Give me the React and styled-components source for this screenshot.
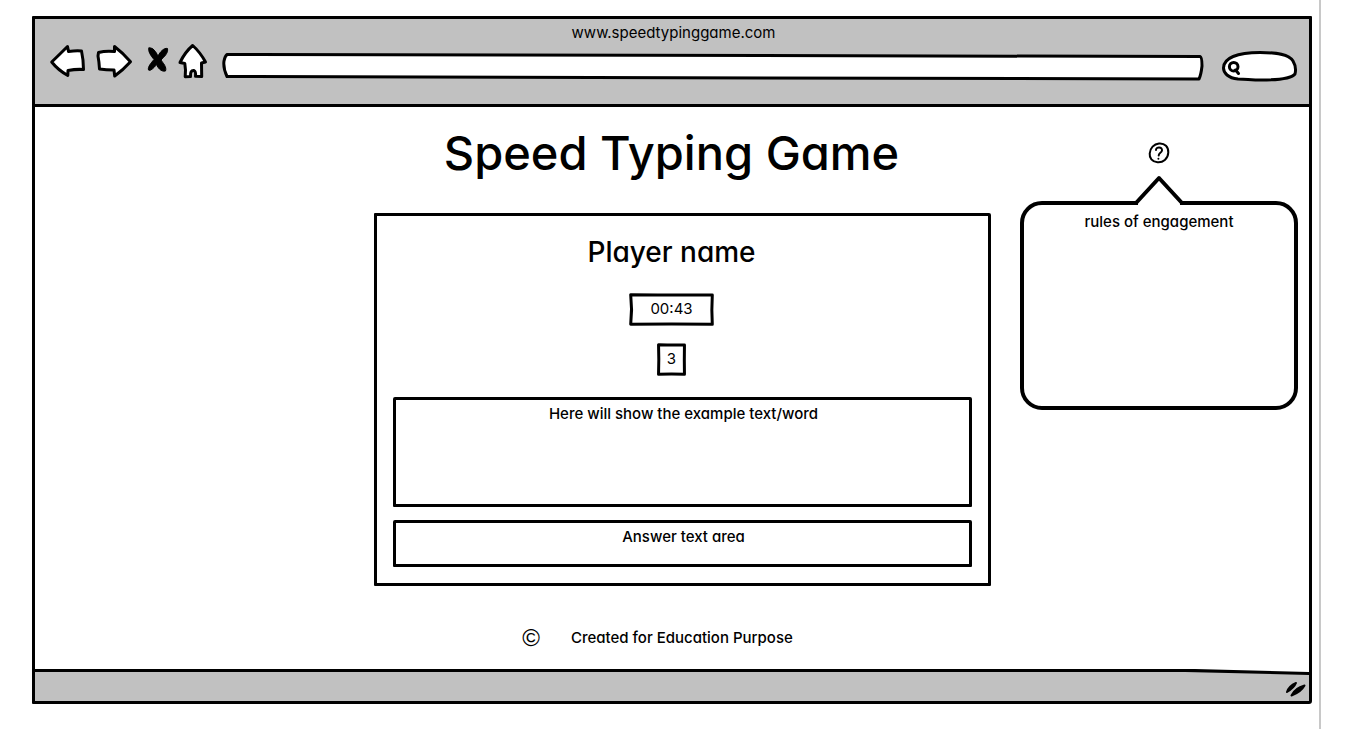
import React from "react";
import styled, { createGlobalStyle } from "styled-components";

const INK = "#000";
const CHROME = "#c1c1c1";

const GlobalStyle = createGlobalStyle`
  * { box-sizing: border-box; }
  body {
    margin: 0;
    background: #fff;
    color: ${INK};
    font-family: Inter, "Open Sans", sans-serif;
    font-feature-settings: "cv11";
    font-size: 15px;
    font-weight: 500;
    line-height: 20px;
  }
  input, textarea, button { font: inherit; color: inherit; font-feature-settings: inherit; }
`;

const Page = styled.div`
  display: flex;
  min-height: 100vh;
  padding-right: 29px;
`;

const Sheet = styled.div`
  flex: 1;
  min-width: 0;
  padding: 16px 7px 25px 32px;
  border-right: 2px solid #c8c8c8;
`;

const BrowserFrame = styled.div`
  display: flex;
  flex-direction: column;
  border: 3px solid ${INK};
  border-radius: 1px 1px 3px 1px;
`;

const BrowserHeader = styled.header`
  padding: 2px 12px 15px 15px;
  background: ${CHROME};
  border-bottom: 3px solid ${INK};
`;

const SiteAddress = styled.div`
  padding-top: 2px;
  font-weight: 400;
  text-align: center;
`;

const Toolbar = styled.div`
  display: flex;
  align-items: center;
  gap: 14px;
  height: 46px;
`;

const NavButtons = styled.nav`
  display: flex;
  align-self: flex-start;
  gap: 10px;
`;

const NavButton = styled.button`
  display: block;
  padding: 0;
  border: 0;
  background: none;
  cursor: pointer;
`;

const Drawing = styled.svg`
  display: block;
  overflow: visible;
  fill: ${(p) => p.$fill || "none"};
  stroke: ${INK};
  stroke-width: ${(p) => p.$weight || 3}px;
  stroke-linejoin: round;
  stroke-linecap: round;
`;

const Field = styled.div`
  position: relative;
  flex: ${(p) => (p.$grow ? "1" : "0 0 78px")};
  height: ${(p) => (p.$grow ? 28 : 34)}px;
  margin-right: ${(p) => (p.$grow ? 2 : 0)}px;
`;

const Outline = styled(Drawing)`
  position: absolute;
  inset: 0;
  width: 100%;
  height: 100%;
`;

const FieldInput = styled.input`
  position: relative;
  display: block;
  width: 100%;
  height: 100%;
  padding: 0 10px 0 ${(p) => p.$inset}px;
  border: 0;
  outline: 0;
  background: transparent;
`;

const Main = styled.main`
  display: grid;
  grid-template-columns: 1fr minmax(0, 617px) 318px;
  padding-bottom: 21px;
`;

const Game = styled.div`
  grid-column: 2;
  padding-top: 16px;
`;

const Title = styled.h1`
  margin: 0 22px 30px 0;
  font-size: 47px;
  line-height: 60px;
  font-weight: 500;
  text-align: center;
  white-space: nowrap;
`;

const Board = styled.section`
  padding: 18px 16px 16px;
  border: 3px solid ${INK};
  border-radius: 1px 2px 1px 1px;
`;

const PlayerPanel = styled.div`
  display: flex;
  flex-direction: column;
  align-items: center;
  margin-bottom: 21px;
  padding-right: 22px;
`;

const PlayerName = styled.h2`
  margin: 0 0 23px;
  font-size: 28px;
  line-height: 36px;
  font-weight: 500;
`;

const CounterBox = styled.div`
  position: relative;
  min-width: ${(p) => p.$width}px;
  padding: 6px 8px 7px;
  font-weight: 400;
  text-align: center;
  & + & { margin-top: 17px; }
`;

const Counter = ({ width, label, children }) => (
  <CounterBox $width={width} aria-label={label}>
    <Outline viewBox="0 0 100 100" preserveAspectRatio="none" aria-hidden="true">
      <path
        vectorEffect="non-scaling-stroke"
        d="M2 5 Q50 7 98 6 Q97 50 98 95 Q50 93 2 95 Q4 50 2 5Z"
      />
    </Outline>
    {children}
  </CounterBox>
);

const box = `
  display: block;
  width: 100%;
  margin: 0;
  padding: 4px 6px 3px 8px;
  border: 3px solid ${INK};
  border-radius: 2px 2px 1px 1px;
  text-align: center;
`;

const ExampleText = styled.p`
  ${box}
  min-height: 110px;
`;

const AnswerArea = styled.textarea`
  ${box}
  height: 47px;
  margin-top: 13px;
  background: transparent;
  outline: 0;
  resize: none;
  overflow: hidden;
  &::placeholder { color: ${INK}; opacity: 1; }
`;

const Credit = styled.p`
  display: flex;
  align-items: center;
  justify-content: center;
  gap: 31px;
  margin: 42px 50px 0 0;
`;

const CopyrightSign = styled.span`
  font-family: "Liberation Sans", sans-serif;
  font-size: 24px;
  font-weight: 400;
`;

const Help = styled.aside`
  display: flex;
  flex-direction: column;
  align-items: center;
  padding: 35px 11px 0 29px;
`;

const Bubble = styled.div`
  position: relative;
  width: 100%;
  min-height: 209px;
  margin-top: 37px;
  padding: 7px 12px;
  border: 4px solid ${INK};
  border-radius: 22px;
  text-align: center;
`;

const BubbleTip = styled(Drawing)`
  position: absolute;
  left: 50%;
  bottom: 100%;
  margin-left: -26px;
  margin-bottom: -1px;
`;

const StatusBar = styled.footer`
  position: relative;
  display: flex;
  align-items: center;
  justify-content: flex-end;
  height: 32px;
  padding: 6px 3px 0 0;
  background: ${CHROME};
`;

const StatusEdge = styled.svg`
  position: absolute;
  left: 0;
  top: 0;
  width: 100%;
  height: 6px;
`;

export default function App() {
  return (
    <Page>
      <GlobalStyle />
      <Sheet>
        <BrowserFrame>
          <BrowserHeader>
            <SiteAddress>www.speedtypinggame.com</SiteAddress>
            <Toolbar>
              <NavButtons aria-label="Browser">
                <NavButton aria-label="Back">
                  <Drawing $fill="#fff" width="36" height="36" viewBox="0 0 36 36">
                    <path d="M1.7 19 Q9 12 17.5 3.5 L18.5 8.5 Q26 7.5 31.5 8 Q33.5 17 33.5 26.5 Q26 26 18 27.5 L17.8 32.5 Q8 27 1.7 19Z" />
                  </Drawing>
                </NavButton>
                <NavButton aria-label="Forward">
                  <Drawing $fill="#fff" width="36" height="36" viewBox="0 0 36 36">
                    <path d="M2.5 9.5 Q10 7.5 18.5 8.5 L18.5 3.5 Q27 10 34.5 18.7 Q27 27 18.7 33 L18 27 Q10 27 3.5 26 Q3 18 2 13Z" />
                  </Drawing>
                </NavButton>
                <NavButton aria-label="Stop">
                  <Drawing $fill={INK} $weight={1} width="26" height="36" viewBox="0 0 26 36">
                    <path d="M7 5 C11 4 14 9 16 13 C18 9 22 4.5 25.5 5.5 C26.5 10 22 14 19 17 C21 20 25 24 23.5 28 C19 29 16 25 14.5 21.5 C12 25 8 28.5 6.5 27 C5.5 24 9 20 12 16.5 C9 13 5.5 8 7 5Z" />
                  </Drawing>
                </NavButton>
                <NavButton aria-label="Home">
                  <Drawing $fill="#fff" width="30" height="36" viewBox="0 0 30 36">
                    <path d="M14.7 2.5 Q22 9 27.5 19 L23.5 20 L23.7 33.5 L17.5 33.3 Q18 28.5 16 27.5 Q12 27 12.5 33.5 L7.2 33.7 Q8 27 6.8 20.5 L2 19.5 Q7 9 14.7 2.5Z" />
                  </Drawing>
                </NavButton>
              </NavButtons>
              <Field $grow>
                <Outline $fill="#fff" viewBox="0 0 982 28" preserveAspectRatio="none" aria-hidden="true">
                  <path
                    vectorEffect="non-scaling-stroke"
                    d="M5 2.5 L979 4.5 Q981 5 981 14 Q980 23 978 27 L5 24.5 Q1 16 2 9 Q3 4 5 2.5Z"
                  />
                </Outline>
                <FieldInput $inset={12} type="text" aria-label="Address" />
              </Field>
              <Field>
                <Outline $fill="#fff" viewBox="0 0 78 34" aria-hidden="true">
                  <path d="M4.5 19 C4.5 9 18 3.5 41 3.5 C58 3.5 70 5 74 12 C77 17 77 21 76 25 C73 29 60 31 42 31 C33 31 26 30 19 30 C9 29 4.5 24 4.5 19Z" />
                  <circle cx="14.7" cy="17.7" r="4.3" />
                  <path d="M16.5 21 L19.5 24.5" />
                </Outline>
                <FieldInput $inset={24} type="search" aria-label="Search" />
              </Field>
            </Toolbar>
          </BrowserHeader>

          <Main>
            <Game>
              <Title>Speed Typing Game</Title>
              <Board>
                <PlayerPanel>
                  <PlayerName>Player name</PlayerName>
                  <Counter width={85} label="Time left">00:43</Counter>
                  <Counter width={27} label="Count">3</Counter>
                </PlayerPanel>
                <ExampleText>Here will show the example text/word</ExampleText>
                <AnswerArea aria-label="Answer" placeholder="Answer text area" />
              </Board>
              <Credit>
                <CopyrightSign>©</CopyrightSign>
                <span>Created for Education Purpose</span>
              </Credit>
            </Game>
            <Help>
              <NavButton aria-label="Help">
                <Drawing $weight={2} width="22" height="22" viewBox="0 0 22 22">
                  <path d="M11 1.5 C17 1 20.5 5 20.3 10.5 C20 17 15 20.8 9.5 20.3 C4 20 1.3 16 1.7 11.5 C2 6 6 2 11 1.5Z" />
                  <path d="M8 8 C8 4.5 14.5 4.5 14 8.5 C13.7 11 10.7 10.7 10.7 13.5 M10.4 16.7 V16.8" />
                </Drawing>
              </NavButton>
              <Bubble>
                <BubbleTip $weight={4} $fill="#fff" width="52" height="28" viewBox="0 0 52 28" aria-hidden="true">
                  <path stroke="none" d="M5 25 L26 0 L47 25 V28 H5Z" />
                  <path d="M3 25 L26 0 L49 25" />
                </BubbleTip>
                rules of engagement
              </Bubble>
            </Help>
          </Main>

          <StatusBar>
            <StatusEdge viewBox="0 0 1274 6" preserveAspectRatio="none" aria-hidden="true">
              <path fill="#fff" d="M0 0 H1274 V4 L1150 2 H0Z" />
              <path fill={INK} d="M0 0 L1160 0 L1274 3 V6 L1150 3 L0 3Z" />
            </StatusEdge>
            <Drawing $fill={INK} $weight={2} width="22" height="18" viewBox="0 0 22 18" aria-hidden="true">
              <path d="M3 13 Q5 7 12 4 Q10 9 3 13Z" />
              <path d="M7.5 16.5 Q11 9 20.5 6.5 Q17 13 7.5 16.5Z" />
            </Drawing>
          </StatusBar>
        </BrowserFrame>
      </Sheet>
    </Page>
  );
}
